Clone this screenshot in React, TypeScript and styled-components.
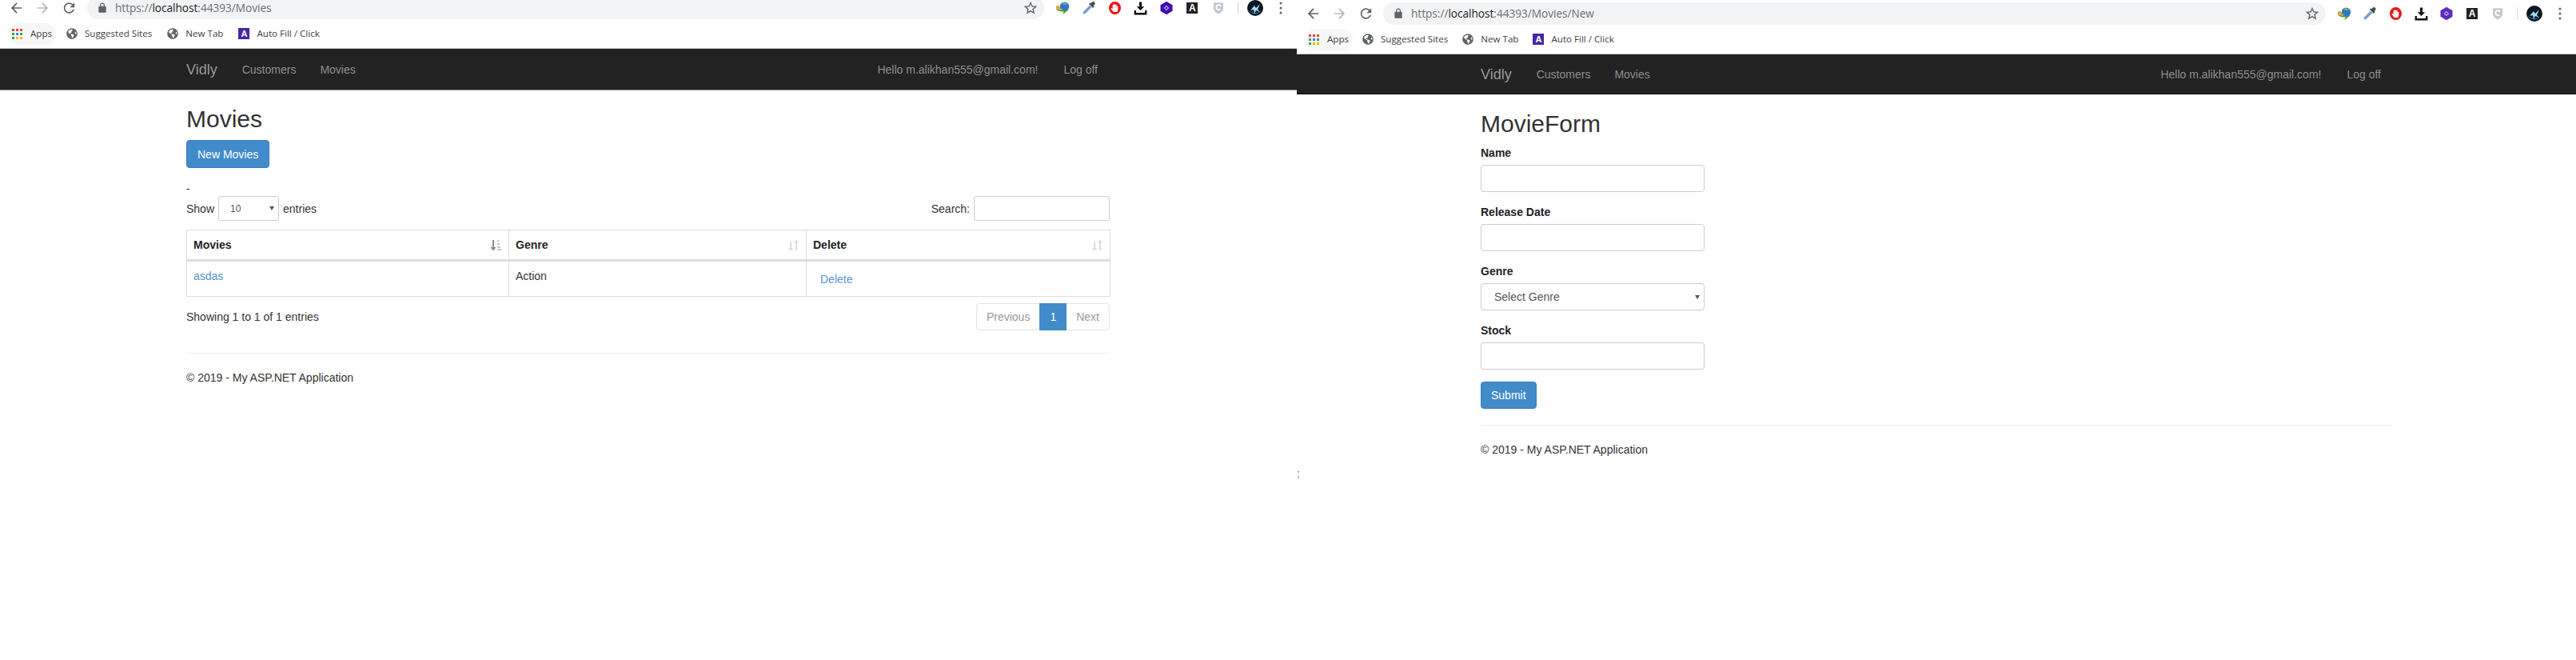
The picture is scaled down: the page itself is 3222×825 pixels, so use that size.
import { ReactNode } from "react";
import styled, { createGlobalStyle } from "styled-components";
import { FaGlobeAmericas, FaHandPaper } from "react-icons/fa";

const GlobalStyle = createGlobalStyle`
  html, body {
    margin: 0;
    background: #fff;
    overflow: hidden;
  }
  body {
    font-family: "Liberation Sans", Arial, sans-serif;
    font-size: 14px;
    line-height: 20px;
    color: #333;
  }
  * {
    box-sizing: border-box;
  }
`;

const Screen = styled.div`
  display: flex;
  width: 3222px;
  height: 825px;
`;

const Pane = styled.section<{ $width: number }>`
  position: relative;
  flex: none;
  width: ${({ $width }) => $width}px;
  height: 825px;
  overflow: hidden;
`;

const Shifted = styled.div<{ $shift: number }>`
  margin-top: ${({ $shift }) => -$shift}px;
`;

const Toolbar = styled.div`
  display: flex;
  align-items: center;
  height: 34px;
  padding: 0 4px 0 4px;
`;

const NavIcon = styled.svg<{ $dim?: boolean }>`
  flex: none;
  width: 33px;
  height: 20px;
  fill: ${({ $dim }) => ($dim ? "#b4b6b9" : "#5f6368")};
`;

const AddressBar = styled.div<{ $start: number }>`
  flex: 1;
  display: flex;
  align-items: center;
  height: 28px;
  margin-left: ${({ $start }) => $start}px;
  margin-right: 7px;
  padding: 0 7px 0 12px;
  border-radius: 14px;
  background: #f1f3f4;
`;

const LockIcon = styled.svg`
  width: 14px;
  height: 14px;
  margin-right: 9px;
  fill: #5f6368;
`;

const Url = styled.div`
  flex: 1;
  font-family: "Open Sans", sans-serif;
  font-size: 13.6px;
  color: #6b6f74;
  white-space: nowrap;
`;

const Host = styled.span`
  color: #202124;
`;

const StarIcon = styled.svg`
  width: 20px;
  height: 20px;
  fill: #5f6368;
`;

const Extension = styled.div<{ $slot: number }>`
  flex: none;
  display: flex;
  align-items: center;
  justify-content: center;
  width: ${({ $slot }) => $slot}px;
  height: 24px;
`;

const ExtensionDivider = styled.div`
  flex: none;
  width: 1px;
  height: 16px;
  margin: 0 5px 0 8px;
  background: #d5d7da;
`;

const HandBadge = styled.div`
  display: flex;
  align-items: center;
  justify-content: center;
  width: 15px;
  height: 16px;
  border: 2px solid #f01414;
  border-radius: 50%;
  background: #f01414;
  color: #fff;
  font-size: 10px;
`;

const LetterBadge = styled.div`
  display: flex;
  align-items: center;
  justify-content: center;
  width: 14px;
  height: 14px;
  background: #202124;
  color: #fff;
  font-size: 12px;
  font-weight: 700;
`;

const Bookmarks = styled.div<{ $gap: number }>`
  display: flex;
  align-items: center;
  gap: ${({ $gap }) => $gap}px;
  height: 33px;
  padding: 0 0 3px 10px;
  background: #fff;
`;

const AppsChip = styled.div`
  display: flex;
  align-items: center;
  gap: 10px;
  width: 60px;
  height: 27px;
  margin-right: -6px;
  padding-left: 5px;
  border-radius: 14px;
  background: #f7f7f8;
`;

const Bookmark = styled.div`
  display: flex;
  align-items: center;
  gap: 9px;
  font-family: "Open Sans", sans-serif;
  font-size: 11.6px;
  color: #3c4043;
  white-space: nowrap;
  svg {
    flex: none;
    width: 14px;
    height: 14px;
    color: #5f6368;
  }
`;

const AutoFillBadge = styled.div`
  flex: none;
  display: flex;
  align-items: center;
  justify-content: center;
  width: 14px;
  height: 14px;
  background: #4527a0;
  color: #fff;
  font-family: "Liberation Sans", sans-serif;
  font-size: 11px;
  font-weight: 700;
`;

const NavBar = styled.nav<{ $inset: number; $end: number; $underline?: boolean }>`
  display: flex;
  align-items: center;
  height: ${({ $underline }) => ($underline ? 53 : 51)}px;
  margin-bottom: ${({ $underline }) => ($underline ? -1 : 0)}px;
  padding: 0 ${({ $end }) => $end}px 0 ${({ $inset }) => $inset}px;
  border-top: 1px solid #c8c8c8;
  border-bottom: ${({ $underline }) => ($underline ? "1px solid #8c8c8c" : "1px solid #080808")};
  background: #222;
  color: #8f8f8f;
`;

const Brand = styled.span`
  margin-right: 31px;
  font-size: 18px;
  color: #999;
`;

const NavLink = styled.span`
  margin-right: 30px;
`;

const NavRight = styled.div`
  display: flex;
  gap: 32px;
  margin-left: auto;
`;

const Content = styled.main<{ $inset: number; $width: number }>`
  width: ${({ $inset, $width }) => $inset + $width}px;
  padding-left: ${({ $inset }) => $inset}px;
`;

const Title = styled.h2`
  margin: 20px 0 10px;
  font-size: 30px;
  font-weight: 400;
  line-height: 33px;
`;

const PrimaryButton = styled.button`
  display: block;
  height: 34px;
  padding: 0 12px;
  border: 1px solid #357ebd;
  border-radius: 4px;
  background: #428bca;
  color: #fff;
  font: inherit;
`;

const NewMoviesButton = styled(PrimaryButton)`
  height: 35px;
  padding: 0 13px;
`;

const Dash = styled.div`
  height: 19px;
  margin-top: 16px;
`;

const TableControls = styled.div`
  display: flex;
  justify-content: space-between;
  height: 31px;
`;

const ControlLabel = styled.label`
  display: flex;
  align-items: center;
  gap: 5px;
`;

const LengthSelect = styled.div`
  display: flex;
  align-items: center;
  justify-content: space-between;
  width: 76px;
  height: 31px;
  padding: 0 5px 0 14px;
  border: 1px solid #ccc;
  border-radius: 3px;
  font-size: 12px;
  color: #555;
`;

const Caret = styled.span`
  width: 0;
  height: 0;
  border-top: 5px solid #555;
  border-left: 3px solid transparent;
  border-right: 3px solid transparent;
`;

const SearchInput = styled.input`
  width: 170px;
  height: 31px;
  border: 1px solid #ccc;
  border-radius: 3px;
`;

const DataTable = styled.table`
  width: calc(100% - 1px);
  margin-top: 11px;
  border-collapse: collapse;
  table-layout: fixed;
`;

const HeadCell = styled.th<{ $width: number }>`
  position: relative;
  width: ${({ $width }) => $width}px;
  height: 38px;
  padding: 0 8px;
  border: 1px solid #ddd;
  border-bottom: 3px solid #ddd;
  color: #222;
  text-align: left;
`;

const SortIcon = styled.svg`
  position: absolute;
  top: 11px;
  right: 8px;
  width: 15px;
  height: 15px;
`;

const BodyCell = styled.td`
  height: 45px;
  padding: 8px;
  border: 1px solid #ddd;
  vertical-align: top;
`;

const CellLink = styled.a`
  color: #5b93d3;
`;

const DeleteLink = styled(CellLink)`
  display: inline-block;
  margin: 4px 0 0 9px;
`;

const TableFooter = styled.div`
  display: flex;
  align-items: center;
  justify-content: space-between;
  margin-top: 8px;
`;

const Pagination = styled.div`
  display: flex;
  height: 34px;
  border: 1px solid #e4e4e4;
  border-radius: 4px;
`;

const PageItem = styled.span<{ $active?: boolean }>`
  display: flex;
  align-items: center;
  padding: 0 ${({ $active }) => ($active ? 13 : 12)}px;
  margin: ${({ $active }) => ($active ? "-1px 0" : 0)};
  background: ${({ $active }) => ($active ? "#428bca" : "transparent")};
  color: ${({ $active }) => ($active ? "#fff" : "#999")};
`;

const Rule = styled.hr<{ $top: number }>`
  height: 1px;
  margin: ${({ $top }) => $top}px 0 20px;
  border: 0;
  background: #eee;
`;

const FormGroup = styled.div`
  width: 280px;
  margin-bottom: 15px;
`;

const FieldLabel = styled.label`
  display: block;
  margin-bottom: 5px;
  color: #222;
  font-weight: 700;
`;

const TextField = styled.input`
  display: block;
  width: 100%;
  height: 34px;
  border: 1px solid #ccc;
  border-radius: 4px;
`;

const SelectField = styled.div`
  display: flex;
  align-items: center;
  justify-content: space-between;
  height: 34px;
  padding: 0 5px 0 16px;
  border: 1px solid #ccc;
  border-radius: 4px;
  color: #555;
`;

const StrayMark = styled.span`
  /* stray glyph sitting on the seam of the two captures */
  position: absolute;
  left: 0;
  top: 582px;
  color: #666;
  font-size: 14px;
`;

function Chrome({ path, start, slot, gap, accent }: { path: string; start: number; slot: number; gap: number; accent: string }) {
  return (
    <>
      <Toolbar>
        <NavIcon viewBox="0 0 24 24">
          <path d="M20 11H7.83l5.59-5.59L12 4l-8 8 8 8 1.41-1.41L7.83 13H20v-2z" />
        </NavIcon>
        <NavIcon viewBox="0 0 24 24" $dim>
          <path d="M12 4l-1.41 1.41L16.17 11H4v2h12.17l-5.58 5.59L12 20l8-8z" />
        </NavIcon>
        <NavIcon viewBox="0 0 24 24">
          <path d="M17.65 6.35C16.2 4.9 14.21 4 12 4c-4.42 0-7.99 3.58-7.99 8s3.57 8 7.99 8c3.73 0 6.84-2.55 7.73-6h-2.08c-.82 2.33-3.04 4-5.65 4-3.31 0-6-2.69-6-6s2.69-6 6-6c1.66 0 3.14.69 4.22 1.78L13 11h7V4l-2.35 2.35z" />
        </NavIcon>
        <AddressBar $start={start}>
          <LockIcon viewBox="0 0 24 24">
            <path d="M18 8h-1V6c0-2.76-2.24-5-5-5S7 3.24 7 6v2H6c-1.1 0-2 .9-2 2v10c0 1.1.9 2 2 2h12c1.1 0 2-.9 2-2V10c0-1.1-.9-2-2-2zM9 6c0-1.66 1.34-3 3-3s3 1.34 3 3v2H9V6z" />
          </LockIcon>
          <Url>
            https://<Host>localhost</Host>:44393{path}
          </Url>
          <StarIcon viewBox="0 0 24 24">
            <path d="M22 9.24l-7.19-.62L12 2 9.19 8.63 2 9.24l5.46 4.73L5.82 21 12 17.27 18.18 21l-1.63-7.03L22 9.24zM12 15.4l-3.76 2.27 1-4.28-3.32-2.88 4.38-.38L12 6.1l1.71 4.04 4.38.38-3.32 2.88 1 4.28L12 15.4z" />
          </StarIcon>
        </AddressBar>
        <Extension $slot={slot}>
          <svg width="20" height="20" viewBox="0 0 24 24">
            <circle cx="15" cy="10" r="7" fill="#2f78c8" />
            <path d="M11 6c3-3 7-2 8 1-3-1-5 0-8-1z" fill="#8cc63f" />
            <path d="M2 12c1 4 6 6 12 5l-2 5 9-7c-6 1-14 1-19-3z" fill="#4f9e2f" />
            <path d="M2 11c2 3 7 4 11 3-3-1-6-3-7-6-3 0-4 2-4 3z" fill="#f09a28" />
          </svg>
        </Extension>
        <Extension $slot={slot}>
          <svg width="20" height="20" viewBox="0 0 24 24">
            <path d="M13 8l3 3-9 9-3 1-1-1 1-3z" fill="#7c9bd6" />
            <path d="M12 6l6 6 2-2-1-1 2-3c1-2-2-5-4-3l-3 2-1-1z" fill="#4a4d52" />
          </svg>
        </Extension>
        <Extension $slot={slot}>
          <HandBadge>
            <FaHandPaper />
          </HandBadge>
        </Extension>
        <Extension $slot={slot}>
          <svg width="19" height="19" viewBox="0 0 24 24" fill="#111">
            <path d="M10 2h4v7h4l-6 6-6-6h4z" />
            <path d="M2 15h3v4h14v-4h3v7H2z" />
          </svg>
        </Extension>
        <Extension $slot={slot}>
          <svg width="20" height="20" viewBox="0 0 24 24">
            <path d="M12 2l9 5.500v9L12 22l-9-5.500v-9z" fill={accent} />
            <path d="M9 12l3-3 3 3-3 3z" fill="none" stroke="#b9a3ee" strokeWidth="1.4" />
          </svg>
        </Extension>
        <Extension $slot={slot}>
          <LetterBadge>A</LetterBadge>
        </Extension>
        <Extension $slot={slot}>
          <svg width="18" height="20" viewBox="0 0 24 24">
            <path d="M4 3h16v10c0 4-4 7-8 9-4-2-8-5-8-9z" fill="#c3c8d0" />
            <path d="M15 14a4 4 0 1 1 1-5" fill="none" stroke="#fff" strokeWidth="2.4" />
          </svg>
        </Extension>
        <ExtensionDivider />
        <Extension $slot={32}>
          <svg width="20" height="20" viewBox="0 0 20 20">
            <circle cx="10" cy="10" r="10" fill="#0b1620" />
            <path d="M0.500 12c4 4 12 6 17 1-3 6-13 6-17-1z" fill="#1e6f9c" />
            <path d="M4 13l5-6 2 3 5-5-3 7 3 3-5-2-2 4-1-5z" fill="#a8dcef" />
          </svg>
        </Extension>
        <Extension $slot={32}>
          <svg width="4" height="16" viewBox="0 0 4 16" fill="#5f6368">
            <circle cx="2" cy="2" r="1.5" />
            <circle cx="2" cy="8" r="1.5" />
            <circle cx="2" cy="14" r="1.5" />
          </svg>
        </Extension>
      </Toolbar>
      <Bookmarks $gap={gap}>
        <AppsChip>
          <svg width="13" height="13" viewBox="0 0 13 13">
            {["#ea4335", "#ea4335", "#ea4335", "#34a853", "#4285f4", "#34a853", "#34a853", "#fbbc05", "#fbbc05"].map(
              (fill, i) => (
                <rect key={i} x={(i % 3) * 5} y={Math.floor(i / 3) * 5} width="3" height="3" fill={fill} />
              ),
            )}
          </svg>
          <Bookmark>Apps</Bookmark>
        </AppsChip>
        <Bookmark>
          <FaGlobeAmericas />
          Suggested Sites
        </Bookmark>
        <Bookmark>
          <FaGlobeAmericas />
          New Tab
        </Bookmark>
        <Bookmark>
          <AutoFillBadge>A</AutoFillBadge>
          Auto Fill / Click
        </Bookmark>
      </Bookmarks>
    </>
  );
}

function SiteNav({ inset, end, underline }: { inset: number; end: number; underline?: boolean }) {
  return (
    <NavBar $inset={inset} $end={end} $underline={underline}>
      <Brand>Vidly</Brand>
      <NavLink>Customers</NavLink>
      <NavLink>Movies</NavLink>
      <NavRight>
        <span>Hello m.alikhan555@gmail.com!</span>
        <span>Log off</span>
      </NavRight>
    </NavBar>
  );
}

function SortArrows({ sorted }: { sorted?: boolean }) {
  if (sorted) {
    return (
      <SortIcon viewBox="0 0 15 15" fill="#8a8a8a">
        <path d="M3 1h2v9h2.500L4 14.500 0.500 10H3z" />
        <rect x="9" y="1" width="2" height="2" fill="#c4c4c4" />
        <rect x="9" y="5" width="3" height="2" fill="#c4c4c4" />
        <rect x="9" y="9" width="4" height="2" fill="#c4c4c4" />
        <rect x="9" y="12" width="5" height="2" fill="#c4c4c4" />
      </SortIcon>
    );
  }
  return (
    <SortIcon viewBox="0 0 15 15" fill="#dcdcdc">
      <path d="M3 3h2v8h2.200L4 14.500 0.800 11H3z" />
      <path d="M10 4H7.800L11 0.500 14.200 4H12v10h-2z" />
    </SortIcon>
  );
}

function Footer({ top }: { top: number }): ReactNode {
  return (
    <>
      <Rule $top={top} />
      <div>© 2019 - My ASP.NET Application</div>
    </>
  );
}

function MoviesPage() {
  return (
    <Content $inset={233} $width={1155}>
      <Title>Movies</Title>
      <NewMoviesButton>New Movies</NewMoviesButton>
      <Dash>-</Dash>
      <TableControls>
        <ControlLabel>
          Show
          <LengthSelect>
            10
            <Caret />
          </LengthSelect>
          entries
        </ControlLabel>
        <ControlLabel>
          Search:
          <SearchInput />
        </ControlLabel>
      </TableControls>
      <DataTable>
        <thead>
          <tr>
            <HeadCell $width={403}>
              Movies
              <SortArrows sorted />
            </HeadCell>
            <HeadCell $width={372}>
              Genre
              <SortArrows />
            </HeadCell>
            <HeadCell $width={380}>
              Delete
              <SortArrows />
            </HeadCell>
          </tr>
        </thead>
        <tbody>
          <tr>
            <BodyCell>
              <CellLink>asdas</CellLink>
            </BodyCell>
            <BodyCell>Action</BodyCell>
            <BodyCell>
              <DeleteLink>Delete</DeleteLink>
            </BodyCell>
          </tr>
        </tbody>
      </DataTable>
      <TableFooter>
        <span>Showing 1 to 1 of 1 entries</span>
        <Pagination>
          <PageItem>Previous</PageItem>
          <PageItem $active>1</PageItem>
          <PageItem>Next</PageItem>
        </Pagination>
      </TableFooter>
      <Footer top={28} />
    </Content>
  );
}

function MovieFormPage() {
  return (
    <Content $inset={230} $width={1140}>
      <Title>MovieForm</Title>
      <FormGroup>
        <FieldLabel>Name</FieldLabel>
        <TextField />
      </FormGroup>
      <FormGroup>
        <FieldLabel>Release Date</FieldLabel>
        <TextField />
      </FormGroup>
      <FormGroup>
        <FieldLabel>Genre</FieldLabel>
        <SelectField>
          Select Genre
          <Caret />
        </SelectField>
      </FormGroup>
      <FormGroup>
        <FieldLabel>Stock</FieldLabel>
        <TextField />
      </FormGroup>
      <PrimaryButton>Submit</PrimaryButton>
      <Footer top={20} />
    </Content>
  );
}

export default function App() {
  return (
    <Screen>
      <GlobalStyle />
      <Pane $width={1622}>
        <Shifted $shift={7}>
          <Chrome path="/Movies" start={6} slot={32.4} gap={19} accent="#3d0fa8" />
          <SiteNav inset={233} end={249} underline />
          <MoviesPage />
        </Shifted>
      </Pane>
      <Pane $width={1600}>
        <Chrome path="/Movies/New" start={5} slot={32} gap={18} accent="#5c2db8" />
        <SiteNav inset={230} end={244} />
        <MovieFormPage />
        <StrayMark>:</StrayMark>
      </Pane>
    </Screen>
  );
}
